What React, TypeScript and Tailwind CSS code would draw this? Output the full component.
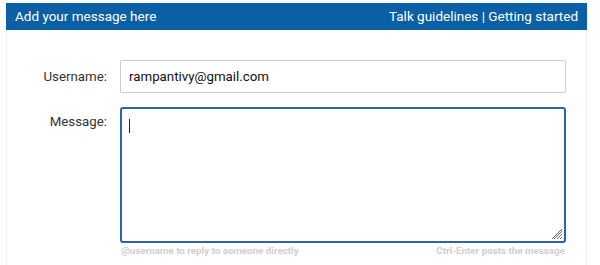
export default function App()
{
    return (
        <div className="w-[600px] h-[265px] bg-white font-['Roboto',sans-serif] overflow-hidden">
            <div className="ml-[6px] mt-[3px] w-[581px] h-[300px] border-x border-[#eeeeee]">
                <div className="h-[27px] bg-[#0b5fa5] text-white text-[13.5px] flex items-center justify-between pl-[9px] pr-[9px] -mx-px">
                    <span>Add your message here</span>
                    <span>Talk guidelines | Getting started</span>
                </div>

                <div className="grid grid-cols-[100px_446px] gap-x-[13px] gap-y-[14px] pt-[30px] text-[13.3px] text-[#222]">
                    <label className="text-right pt-[7px] text-[#333]">Username:</label>
                    <div className="h-[33px] border border-[#cccccc] rounded-[2px] flex items-center px-[8px] text-[#111]">
                        rampantivy@gmail.com
                    </div>

                    <label className="text-right pt-[5px] text-[#333]">Message:</label>
                    <div>
                        <div className="relative h-[136px] border-2 border-[#2f62ad] rounded-[3px] px-[7px] pt-[10px]">
                            <div className="w-px h-[14px] bg-[#222]" />
                            <svg className="absolute right-[1px] bottom-[1px]" width="11" height="11" viewBox="0 0 11 11">
                                <path d="M10 2 L2 10 M10 5 L5 10 M10 8 L8 10 M10 0 L0 10" stroke="#666" strokeWidth="1" />
                            </svg>
                        </div>
                        <div className="flex justify-between text-[9.8px] font-bold text-[#cfcfcf] mt-[1px] px-[1px]">
                            <span>@username to reply to someone directly</span>
                            <span>Ctrl-Enter posts the message</span>
                        </div>
                    </div>
                </div>
            </div>
        </div>
    )
}
